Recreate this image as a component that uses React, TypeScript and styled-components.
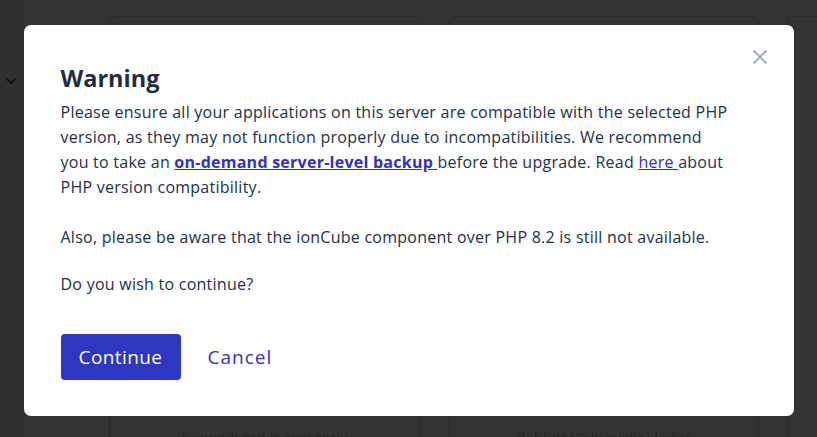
import React from "react";
import styled, { createGlobalStyle } from "styled-components";

const Global = createGlobalStyle`
  html, body { margin: 0; padding: 0; }
  body { background: #333333; font-family: "Open Sans", "Liberation Sans", sans-serif; }
  #root { width: 817px; height: 437px; overflow: hidden; }
`;

const Page = styled.div`
  position: relative;
  width: 817px;
  height: 437px;
  background: #333333;
  display: flex;
  overflow: hidden;
`;

const Sidebar = styled.div`
  width: 23px;
  flex-shrink: 0;
  background: #303030;
  border-right: 1px solid #2e2e2e;
  display: flex;
  flex-direction: column;
  align-items: center;
  padding-top: 77px;
  box-sizing: border-box;
`;

const Main = styled.div`
  flex: 1;
  min-width: 0;
  padding: 16px 0 0 86px;
  display: flex;
  flex-direction: column;
`;

const CardRow = styled.div`
  display: flex;
  gap: 28px;
`;

const BgCard = styled.div`
  width: 311px;
  height: 480px;
  border: 1px solid #2c2c2c;
  border-radius: 6px;
  flex-shrink: 0;
  display: flex;
  flex-direction: column;
  justify-content: flex-end;
  align-items: center;
  padding-bottom: 48px;
  box-sizing: border-box;
  font-size: 15px;
  color: #262626;
`;

const Overlay = styled.div`
  position: absolute;
  inset: 0;
  display: flex;
  align-items: flex-start;
  justify-content: center;
  padding-top: 25px;
`;

const Modal = styled.div`
  position: relative;
  width: 770px;
  height: 391px;
  box-sizing: border-box;
  background: #ffffff;
  border-radius: 7px;
  padding: 38px 37px 0 37px;
  color: #223148;
  font-family: "Open Sans", "Liberation Sans", sans-serif;
`;

const Close = styled.button`
  position: absolute;
  top: 22px;
  right: 24px;
  width: 20px;
  height: 20px;
  padding: 0;
  border: 0;
  background: transparent;
  color: #a3aab6;
  display: flex;
  align-items: center;
  justify-content: center;
`;

const Title = styled.h2`
  margin: 0 0 7px 0;
  font-size: 23.5px;
  line-height: 30px;
  font-weight: 700;
  color: #1f2d47;
`;

const Body = styled.div`
  font-size: 16px;
  line-height: 25px;
  letter-spacing: 0.25px;
  margin-right: -10px;
`;

const Para = styled.p<{ $gap: number }>`
  margin: 0 0 ${(p) => p.$gap}px 0;
`;

const Link = styled.a<{ $bold?: boolean }>`
  color: #3131c4;
  text-decoration: underline;
  font-weight: ${(p) => (p.$bold ? 700 : 400)};
`;

const Actions = styled.div`
  display: flex;
  align-items: center;
  gap: 27px;
`;

const Primary = styled.button`
  width: 120px;
  height: 46px;
  border: 0;
  border-radius: 4px;
  background: #2f36c0;
  color: #ffffff;
  font-family: inherit;
  font-size: 19px;
  letter-spacing: 0.4px;
  font-weight: 500;
`;

const Secondary = styled.button`
  border: 0;
  background: transparent;
  color: #3234c2;
  font-family: inherit;
  font-size: 19px;
  letter-spacing: 1px;
  padding: 0;
`;

export default function App() {
  return (
    <>
      <Global />
      <Page>
        <Sidebar>
          <svg width="12" height="8" viewBox="0 0 12 8">
            <path d="M1.5 1.5 L6 6 L10.5 1.5" stroke="#151515" strokeWidth="2" fill="none" />
          </svg>
        </Sidebar>
        <Main>
          <CardRow>
            <BgCard>Supervisord is currently</BgCard>
            <BgCard>RabbitMQ is available for</BgCard>
            <BgCard />
          </CardRow>
        </Main>
        <Overlay>
          <Modal>
            <Close aria-label="Close">
              <svg width="16" height="16" viewBox="0 0 16 16">
                <path d="M1.5 1.5 L14.5 14.5 M14.5 1.5 L1.5 14.5" stroke="currentColor" strokeWidth="1.8" />
              </svg>
            </Close>
            <Title>Warning</Title>
            <Body>
              <Para $gap={25}>
                Please ensure all your applications on this server are compatible with the selected PHP
                <br />
                version, as they may not function properly due to incompatibilities. We recommend
                <br />
                you to take an <Link $bold href="#">on-demand server-level backup </Link>before the upgrade. Read{" "}
                <Link href="#">here </Link>about
                <br />
                PHP version compatibility.
              </Para>
              <Para $gap={22}>Also, please be aware that the ionCube component over PHP 8.2 is still not available.</Para>
              <Para $gap={37}>Do you wish to continue?</Para>
            </Body>
            <Actions>
              <Primary>Continue</Primary>
              <Secondary>Cancel</Secondary>
            </Actions>
          </Modal>
        </Overlay>
      </Page>
    </>
  );
}
